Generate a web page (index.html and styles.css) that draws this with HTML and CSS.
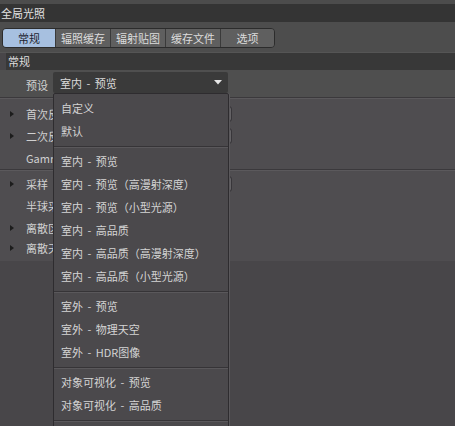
FILE: index.html
```html
<!DOCTYPE html>
<html lang="zh">
<head>
<meta charset="utf-8">
<link rel="stylesheet" href="styles.css">
</head>
<body>
<div class="app">
  <div class="topstrip"></div>
  <div class="titlebar">全局光照</div>
  <div class="tabbar">
    <div class="tabs">
      <div class="tab active">常规</div>
      <div class="tab">辐照缓存</div>
      <div class="tab">辐射贴图</div>
      <div class="tab">缓存文件</div>
      <div class="tab last">选项</div>
    </div>
  </div>
  <div class="section">常规</div>
  <div class="preset-row">
    <span class="label">预设</span>
    <div class="select">
      <span>室内 - 预览</span>
      <svg class="arrow" width="8" height="5" viewBox="0 0 8 5"><path d="M0 0H8L4 4.5Z" fill="#e6e6e6"/></svg>
    </div>
  </div>
  <div class="group g1">
    <div class="row"><span class="tri"></span><span class="rlabel">首次反弹</span><span class="field"></span></div>
    <div class="row"><span class="tri"></span><span class="rlabel">二次反弹</span><span class="field"></span></div>
    <div class="row"><span class="tri none"></span><span class="rlabel">Gamma</span></div>
  </div>
  <div class="group g2">
    <div class="row"><span class="tri"></span><span class="rlabel">采样</span><span class="field"></span></div>
    <div class="row"><span class="tri none"></span><span class="rlabel">半球采样</span></div>
    <div class="row"><span class="tri"></span><span class="rlabel">离散区域光</span></div>
    <div class="row"><span class="tri"></span><span class="rlabel">离散天空</span></div>
  </div>
  <div class="rest"></div>

  <div class="menu">
    <div class="item">自定义</div>
    <div class="item">默认</div>
    <div class="sep"></div>
    <div class="item">室内 - 预览</div>
    <div class="item">室内 - 预览（高漫射深度）</div>
    <div class="item">室内 - 预览（小型光源）</div>
    <div class="item">室内 - 高品质</div>
    <div class="item">室内 - 高品质（高漫射深度）</div>
    <div class="item">室内 - 高品质（小型光源）</div>
    <div class="sep"></div>
    <div class="item">室外 - 预览</div>
    <div class="item">室外 - 物理天空</div>
    <div class="item">室外 - HDR图像</div>
    <div class="sep"></div>
    <div class="item">对象可视化 - 预览</div>
    <div class="item">对象可视化 - 高品质</div>
    <div class="sep"></div>
  </div>
</div>
</body>
</html>
```

FILE: styles.css
```css
html, body {
  margin: 0;
  padding: 0;
  background: #484649;
}
body {
  width: 455px;
  height: 426px;
  overflow: hidden;
  font-family: "Noto Sans CJK SC", "Noto Sans", sans-serif;
  font-size: 11px;
  color: #d2d2d2;
}
.app {
  position: relative;
  height: 426px;
  display: flex;
  flex-direction: column;
}
.topstrip {
  height: 4px;
  background: #4c4c4c;
}
.titlebar {
  height: 18px;
  line-height: 18px;
  background: #343434;
  padding-left: 1px;
  color: #e2e2e2;
  font-size: 11px;
}
.tabbar {
  height: 31px;
  background: #4d4d4d;
  padding: 6px 0 0 2px;
  box-sizing: border-box;
  border-bottom: 1px solid #555;
}
.tabs {
  display: flex;
  width: 273px;
  height: 20px;
  border: 1px solid #2c2c2c;
  border-radius: 4px;
  box-sizing: border-box;
  overflow: hidden;
}
.tab {
  flex: 0 0 55px;
  text-align: center;
  line-height: 18px;
  background: #5f5f5f;
  border-right: 1px solid #3a3a3a;
  box-sizing: border-box;
  color: #dcdcdc;
  font-size: 11px;
}
.tab.active {
  flex-basis: 53px;
  background: #a7c0e0;
  color: #1e2430;
}
.tab.last {
  flex: 1;
  border-right: none;
}
.section {
  margin-left: 6px;
  height: 17px;
  line-height: 17px;
  background: #383838;
  padding-left: 2px;
  color: #dedede;
}
.preset-row {
  display: flex;
  align-items: center;
  height: 27px;
  background: #4f4f4f;
  padding-top: 2px;
  box-sizing: border-box;
}
.label {
  width: 53px;
  text-align: right;
  padding-right: 5px;
  box-sizing: border-box;
}
.select {
  width: 175px;
  height: 21px;
  background: #3a3a3a;
  border-radius: 2px;
  display: flex;
  align-items: center;
  justify-content: space-between;
  padding: 0 6px 0 7px;
  box-sizing: border-box;
  color: #dadada;
  margin-top: -4px;
  word-spacing: 2px;
}
.arrow {
  display: block;
}
.group {
  background: #4f4d50;
  border-top: 1px solid #3b393c;
  box-shadow: inset 0 1px 0 #5b595c;
}
.g1 {
  padding-top: 5px;
  height: 72px;
  box-sizing: border-box;
}
.g2 {
  padding-top: 3px;
  height: 92px;
  box-sizing: border-box;
}
.row {
  display: flex;
  align-items: center;
  height: 22px;
}
.g2 .row:nth-child(3) {
  height: 21px;
}
.g2 .row:nth-child(4) {
  height: 19px;
}
.tri {
  flex: none;
  width: 0;
  height: 0;
  border-left: 4px solid #1c1c1c;
  border-top: 3px solid transparent;
  border-bottom: 3px solid transparent;
  margin-left: 10px;
  margin-right: 12px;
}
.tri.none {
  border-left-color: transparent;
}
.rlabel {
  flex: none;
  width: 27px;
  overflow: hidden;
  white-space: nowrap;
  color: #d0d0d0;
}
.field {
  flex: none;
  margin-left: 120px;
  width: 59px;
  height: 16px;
  border: 1px solid #38363a;
  border-radius: 3px;
  background: #4a484b;
  box-sizing: border-box;
  box-shadow: inset -1px 0 0 #646265;
}
.rest {
  flex: 1;
  background: #484649;
}
.menu {
  position: absolute;
  left: 53px;
  top: 93px;
  width: 176px;
  height: 340px;
  background: #4b494c;
  border: 1px solid #2e2c2f;
  border-radius: 2px;
  box-sizing: border-box;
  padding-top: 3px;
  box-shadow: 1px 0 0 #5a585b;
}
.item {
  height: 22.9px;
  line-height: 22.9px;
  padding-left: 7px;
  color: #d4d4d4;
  white-space: nowrap;
  word-spacing: 2px;
}
.sep {
  height: 7.5px;
  position: relative;
}
.sep::after {
  content: "";
  position: absolute;
  left: 0;
  right: 0;
  top: 3px;
  height: 1px;
  background: #363437;
  box-shadow: 0 1px 0 #5a585b;
}
```
